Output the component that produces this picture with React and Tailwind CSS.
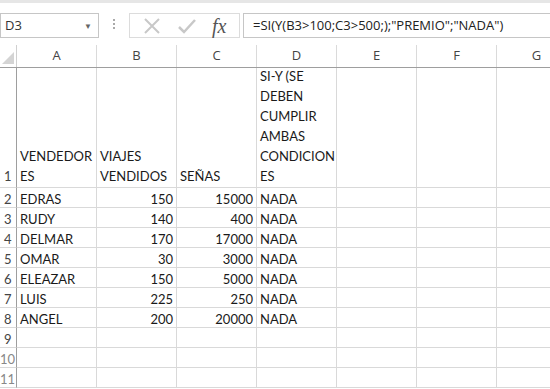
import React from "react";

const cols = ["A", "B", "C", "D", "E", "F", "G"];

const rows = [
  ["EDRAS", "150", "15000", "NADA"],
  ["RUDY", "140", "400", "NADA"],
  ["DELMAR", "170", "17000", "NADA"],
  ["OMAR", "30", "3000", "NADA"],
  ["ELEAZAR", "150", "5000", "NADA"],
  ["LUIS", "225", "250", "NADA"],
  ["ANGEL", "200", "20000", "NADA"],
  ["", "", "", ""],
  ["", "", "", ""],
  ["", "", "", ""],
];

const cellFont = { fontFamily: "Lato, 'Liberation Sans', sans-serif" };

const Cell = ({ children, right }) => (
  <div
    className={`w-[80px] shrink-0 h-[20px] border-r border-b border-[#d9d9d9] px-[3px] pt-[2px] text-[13px] leading-[18px] text-[#1a1a1a] whitespace-nowrap ${
      right ? "text-right" : "text-left"
    }`}
  >
    {children}
  </div>
);

const WrapCell = ({ lines }) => (
  <div className="w-[80px] shrink-0 h-[120px] border-r border-b border-[#d9d9d9] px-[3px] pb-[1px] flex flex-col justify-end text-[13px] leading-[20px] text-[#1a1a1a]">
    {lines.map((l, i) => (
      <div key={i} className="whitespace-nowrap">
        {l}
      </div>
    ))}
  </div>
);

export default function App() {
  return (
    <div className="w-[550px] h-[389px] overflow-hidden bg-white" style={cellFont}>
      {/* formula bar */}
      <div className="h-[45px] border-t-[3px] border-[#e6e6e6] flex items-start pt-[10px]">
        <div className="w-[99px] h-[25px] border border-[#c6c6c6] flex items-center justify-between pl-[4px] pr-[6px]">
          <span className="text-[13px] text-[#333]" style={{ fontFamily: "'Open Sans', sans-serif" }}>
            D3
          </span>
          <span className="text-[8px] text-[#666]">▼</span>
        </div>
        <div className="w-[30px] flex flex-col items-center gap-[2px] pt-[6px]">
          <span className="w-[2px] h-[2px] bg-[#aaa]" />
          <span className="w-[2px] h-[2px] bg-[#aaa]" />
          <span className="w-[2px] h-[2px] bg-[#aaa]" />
        </div>
        <div className="w-[111px] h-[25px] border border-[#dcdcdc] flex items-center">
          <svg width="18" height="18" viewBox="0 0 18 18" className="ml-[13px]">
            <path d="M2 2 L16 16 M16 2 L2 16" stroke="#c8c8c8" strokeWidth="2" fill="none" />
          </svg>
          <svg width="18" height="18" viewBox="0 0 18 18" className="ml-[17px]">
            <path d="M1 10 L6 15 L17 3" stroke="#c8c8c8" strokeWidth="2.5" fill="none" />
          </svg>
          <span
            className="ml-[16px] text-[20px] italic text-[#555] leading-none"
            style={{ fontFamily: "'Liberation Serif', serif" }}
          >
            fx
          </span>
        </div>
        <div className="flex-1 h-[25px] ml-[3px] border border-r-0 border-[#c6c6c6] flex items-center pl-[9px] pt-[1px]">
          <span className="text-[13px] text-[#222] whitespace-nowrap" style={{ fontFamily: "'Open Sans', sans-serif" }}>
            =SI(Y(B3&gt;100;C3&gt;500;);"PREMIO";"NADA")
          </span>
        </div>
      </div>

      {/* column headers */}
      <div className="flex h-[23px] border-b border-[#9e9e9e]">
        <div className="w-[17px] shrink-0 border-r border-[#d0d0d0] relative">
          <svg width="12" height="12" viewBox="0 0 12 12" className="absolute right-[2px] bottom-[3px]">
            <path d="M12 0 L12 12 L0 12 Z" fill="#d4d4d4" />
          </svg>
        </div>
        {cols.map((c) => (
          <div
            key={c}
            className="w-[80px] shrink-0 border-r border-[#dadada] flex items-center justify-center text-[13px] text-[#444]"
            style={{ fontFamily: "'Open Sans', sans-serif" }}
          >
            {c}
          </div>
        ))}
      </div>

      {/* row 1 */}
      <div className="flex">
        <div className="w-[17px] shrink-0 h-[120px] border-r border-[#9e9e9e] border-b border-b-[#d9d9d9] flex items-end pl-[4px] pb-[1px] text-[13px] leading-[20px] text-[#444]">
          1
        </div>
        <WrapCell lines={["VENDEDOR", "ES"]} />
        <WrapCell lines={["VIAJES", "VENDIDOS"]} />
        <WrapCell lines={["SEÑAS"]} />
        <WrapCell lines={["SI-Y (SE", "DEBEN", "CUMPLIR", "AMBAS", "CONDICION", "ES"]} />
        <WrapCell lines={[]} />
        <WrapCell lines={[]} />
        <WrapCell lines={[]} />
      </div>

      {rows.map((r, i) => (
        <div key={i} className="flex">
          <div
            className={`w-[17px] shrink-0 h-[20px] border-r border-[#9e9e9e] border-b border-b-[#d9d9d9] pt-[2px] text-[13px] leading-[18px] ${
              i + 2 >= 10 ? "pl-0 text-[#888]" : "pl-[4px] text-[#444]"
            }`}
          >
            {i + 2}
          </div>
          <Cell>{r[0]}</Cell>
          <Cell right>{r[1]}</Cell>
          <Cell right>{r[2]}</Cell>
          <Cell>{r[3]}</Cell>
          <Cell />
          <Cell />
          <Cell />
        </div>
      ))}
    </div>
  );
}
